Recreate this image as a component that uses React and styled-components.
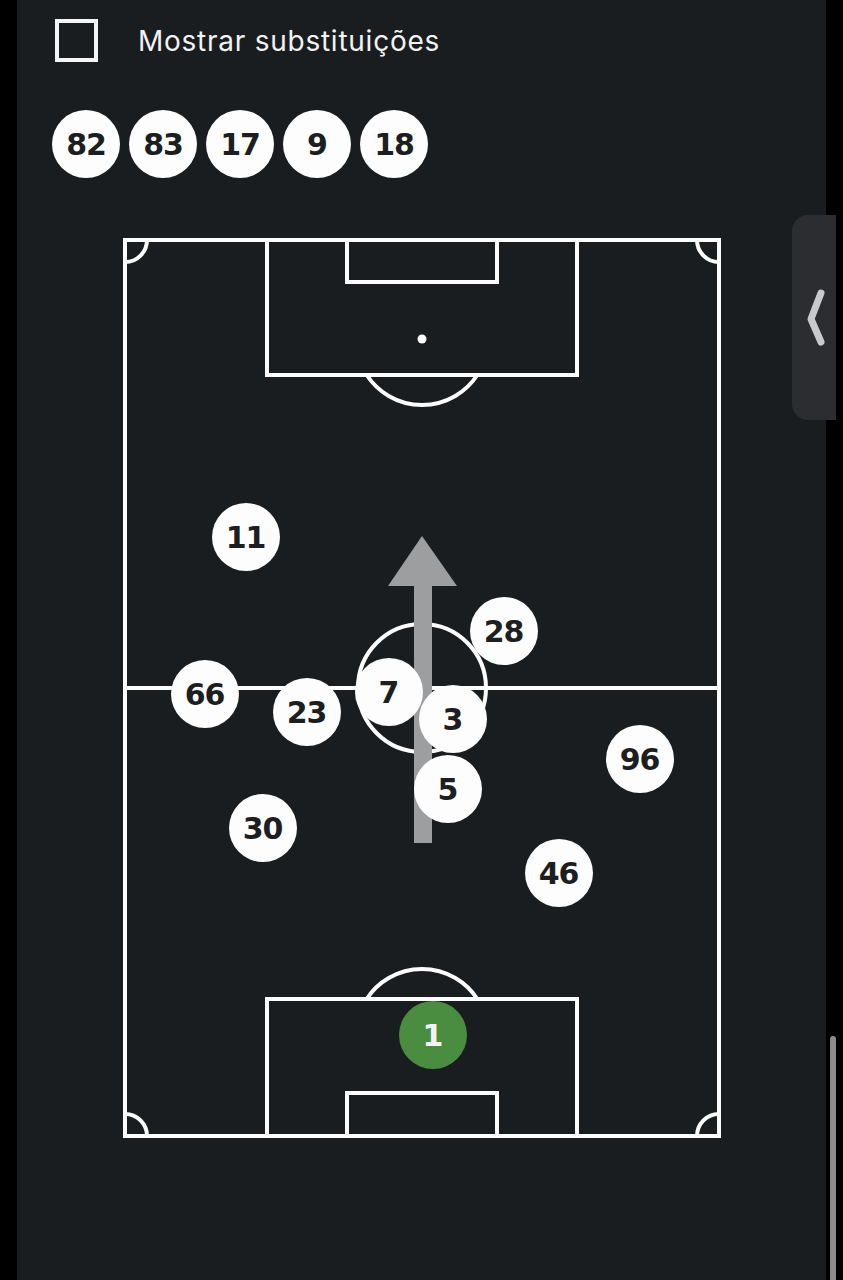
import React from 'react'
import styled, { createGlobalStyle } from 'styled-components'

const GlobalStyle = createGlobalStyle`
  html, body {
    margin: 0;
    padding: 0;
    background: #000;
  }
`

const bench = ['82', '83', '17', '9', '18']

// positions inside the pitch box (598 x 900)
const lineup = [
  { n: '11', x: 123, y: 299 },
  { n: '28', x: 381, y: 393 },
  { n: '66', x: 82, y: 456 },
  { n: '23', x: 184, y: 474 },
  { n: '7', x: 266, y: 454 },
  { n: '3', x: 330, y: 481 },
  { n: '96', x: 517, y: 521 },
  { n: '5', x: 325, y: 551 },
  { n: '30', x: 140, y: 590 },
  { n: '46', x: 436, y: 635 },
  { n: '1', x: 310, y: 797, keeper: true }
]

const Screen = styled.div`
  position: relative;
  display: flex;
  width: 843px;
  height: 1280px;
  overflow: hidden;
  background: #000;
`

const Panel = styled.div`
  display: flex;
  flex-direction: column;
  margin-left: 17px;
  width: 809px;
  background: #1a1d20;
`

const Header = styled.label`
  display: flex;
  align-items: center;
  padding: 19px 0 0 38px;
`

const Checkbox = styled.span`
  box-sizing: border-box;
  width: 43px;
  height: 43px;
  border: 4px solid #f5f5f5;
`

const Label = styled.span`
  margin-left: 40px;
  font-family: Inter, "Noto Sans", sans-serif;
  font-size: 28px;
  color: #f2f2f2;
  letter-spacing: 0.75px;
`

const Bench = styled.div`
  display: flex;
  gap: 9px;
  margin-top: 48px;
  padding-left: 35px;
`

const Chip = styled.div`
  display: flex;
  align-items: center;
  justify-content: center;
  width: 68px;
  height: 68px;
  border-radius: 50%;
  background: ${p => (p.$keeper ? '#4b8d40' : '#fdfdfd')};
  color: ${p => (p.$keeper ? '#f4f4f4' : '#1c1e21')};
  font-family: "DejaVu Sans", sans-serif;
  font-weight: 700;
  font-size: 30px;
  letter-spacing: -1px;
`

const Player = styled(Chip)`
  position: absolute;
  transform: translate(-50%, -50%);
`

const Pitch = styled.div`
  position: relative;
  align-self: center;
  width: 598px;
  height: 900px;
  margin-top: 60px;

  svg {
    display: block;
  }
`

const Gutter = styled.div`
  display: flex;
  flex-direction: column;
  justify-content: flex-end;
  width: 17px;
`

const Thumb = styled.div`
  width: 6px;
  height: 244px;
  margin-left: 4px;
  border-radius: 3px 3px 0 0;
  background: #8b8b8b;
`

const SideTab = styled.button`
  position: absolute;
  top: 215px;
  left: 792px;
  width: 44px;
  height: 205px;
  padding: 0 0 0 4px;
  border: none;
  border-radius: 16px 0 0 16px;
  background: #2c2d30;
  display: flex;
  align-items: center;
  justify-content: center;
`

const PitchLines = () => (
  <svg width='598' height='900' viewBox='0 0 598 900'>
    <g fill='none' stroke='#fdfdfd' strokeWidth='4'>
      <rect x='2' y='2' width='594' height='896' />
      <line x1='2' y1='450' x2='596' y2='450' />
      <circle cx='299' cy='450' r='64' />
      <rect x='144' y='2' width='310' height='135' />
      <rect x='224' y='2' width='150' height='42' />
      <path d='M 243.7 137 A 66 66 0 0 0 354.3 137' />
      <rect x='144' y='761' width='310' height='137' />
      <rect x='224' y='855' width='150' height='43' />
      <path d='M 243.7 761 A 66 66 0 0 1 354.3 761' />
      <path d='M 2 24 A 22 22 0 0 0 24 2' />
      <path d='M 574 2 A 22 22 0 0 0 596 24' />
      <path d='M 596 876 A 22 22 0 0 0 574 898' />
      <path d='M 24 898 A 22 22 0 0 0 2 876' />
    </g>
    <circle cx='299' cy='101' r='4.5' fill='#fdfdfd' />
    <g fill='#9d9ea0'>
      <rect x='291' y='347' width='18' height='258' />
      <polygon points='299,298 334,348 265,348' />
    </g>
  </svg>
)

export default function App () {
  return (
    <Screen>
      <GlobalStyle />
      <Panel>
        <Header>
          <Checkbox />
          <Label>Mostrar substituições</Label>
        </Header>
        <Bench>
          {bench.map(n => <Chip key={n}>{n}</Chip>)}
        </Bench>
        <Pitch>
          <PitchLines />
          {lineup.map(p => (
            <Player key={p.n} $keeper={p.keeper} style={{ left: p.x, top: p.y }}>
              {p.n}
            </Player>
          ))}
        </Pitch>
      </Panel>
      <Gutter>
        <Thumb />
      </Gutter>
      <SideTab aria-label='Abrir'>
        <svg width='20' height='60' viewBox='0 0 20 60'>
          <polyline
            points='15,5 5,31 15,54'
            fill='none'
            stroke='#c9c9cb'
            strokeWidth='7'
            strokeLinecap='round'
            strokeLinejoin='round'
          />
        </svg>
      </SideTab>
    </Screen>
  )
}
